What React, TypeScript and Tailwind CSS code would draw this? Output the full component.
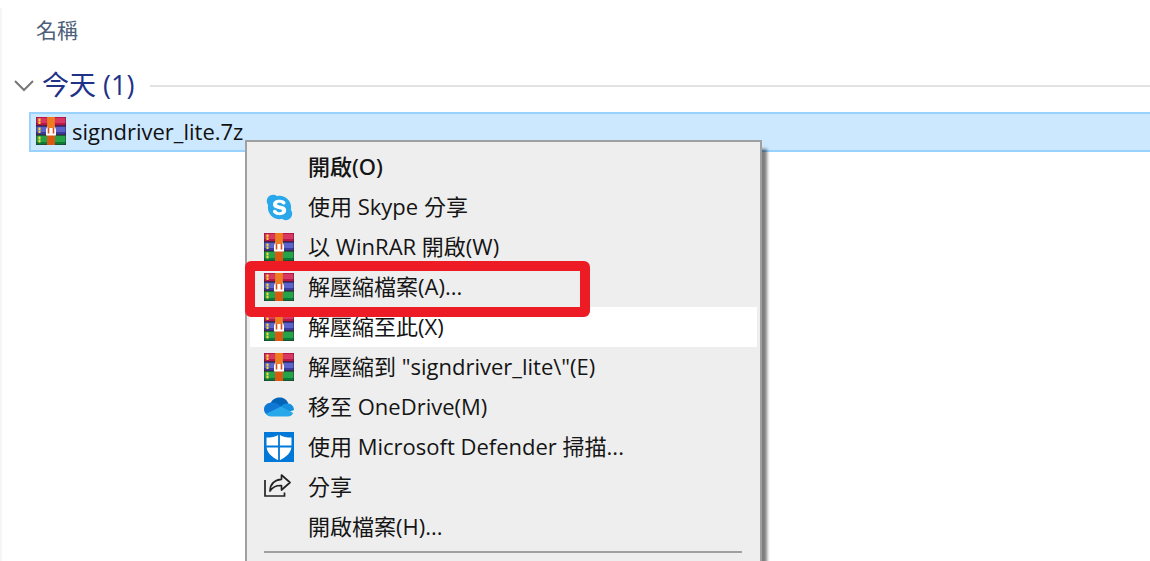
import type { ReactNode } from "react";
import { FaSkype } from "react-icons/fa";

function ArchiveIcon() {
  return (
    <svg viewBox="0 0 30 28" className="h-7 w-[30px] shrink-0" aria-hidden="true">
      <rect width="30" height="9" fill="#b8174c" />
      <rect y="1" width="30" height="5" fill="#d8385f" />
      <rect y="9" width="30" height="9" fill="#3a3c9c" />
      <rect y="10" width="30" height="5" fill="#5a63c8" />
      <rect y="18" width="30" height="10" fill="#0c7a35" />
      <rect y="19" width="30" height="6" fill="#25a348" />
      <path d="M0 8.700h30M0 17.800h30" stroke="#40203c" strokeWidth="1" />
      <path d="M0 27.500h30M.5 0v28M29.500 0v28" stroke="#2b1836" strokeOpacity=".4" />
      <path d="M3.500 1.500v6M3.500 10.500v6M3.500 19.500v6.500" stroke="#ffdc32" strokeWidth="2" strokeDasharray="2.500 .5" />
      <rect x="11" width="8" height="28" fill="#e46818" />
      <rect x="11" y="18" width="8" height="10" fill="#dc5712" />
      <path d="M10 18.500v-6L11.500 9h7l1.500 3.500v6z" fill="#fff" />
      <path d="M12.500 16.500V9h5v7.500" fill="none" stroke="#e04a12" strokeWidth="1.600" />
      <path d="M11.500 0h7v11h-7z" fill="#ee7d20" />
    </svg>
  );
}

function SkypeIcon() {
  return (
    <span className="ml-[2px] flex size-[26px] items-center justify-center bg-[radial-gradient(circle,#fff_50%,transparent_52%)]">
      <FaSkype className="size-[29px] shrink-0 text-[#28a8ea]" aria-hidden="true" />
    </span>
  );
}

function CloudIcon() {
  return (
    <svg viewBox="0 0 30 20" className="h-5 w-[30px]" aria-hidden="true">
      <path d="M6 7C8 2 12 .4 16 .4c4 0 7 2.600 8.300 6L20 14H4z" fill="#0364b8" />
      <path d="M6.500 5.800c3-.6 5.500.2 7.500 1.500l5 3L6 18.500C2 18.500 0 15.500 0 12.300 0 8.500 3 6 6.500 5.800z" fill="#0f78d4" />
      <path d="M17 9.500c1.700-2.200 4-3.300 7-3.100 3.500.2 6 3 6 6.600L22 16z" fill="#1490df" />
      <path d="M2 16.800 17 9.500 29.200 16c-1.200 2.400-3 3.500-5.500 3.500H7c-2.200 0-4-.8-5-2.700z" fill="#28a8ea" />
    </svg>
  );
}

function DefenderIcon() {
  return (
    <svg viewBox="0 0 30 30" className="size-[30px]" aria-hidden="true">
      <rect width="30" height="30" fill="#0078d7" />
      <path d="M15 2.500C11.500 5 7 5.500 2.500 5.500V14c0 6.500 5 11 12.500 14.500C22.500 25 27.500 20.500 27.500 14V5.500C23 5.500 18.500 5 15 2.500z" fill="#fff" />
      <path d="M15 2v27M2 14.500h26" stroke="#0078d7" strokeWidth="1.800" />
    </svg>
  );
}

function ShareIcon() {
  return (
    <svg viewBox="0 0 28 26" className="h-[26px] w-7" fill="none" stroke="#222" strokeWidth="1.700" aria-hidden="true">
      <path d="M1 6v16h19.500v-3.500" />
      <path d="M17.500 1 26 8.500 17.500 16v-4.500C12 11.300 8.500 13 6 17c.2-7 4.500-11.300 11.500-11.700z" strokeLinejoin="round" />
    </svg>
  );
}

type MenuEntry = {
  label: string;
  icon?: ReactNode;
  primary?: boolean;
  hovered?: boolean;
  marked?: boolean;
};

const entries: MenuEntry[] = [
  { label: "開啟(O)", primary: true },
  { label: "使用 Skype 分享", icon: <SkypeIcon /> },
  { label: "以 WinRAR 開啟(W)", icon: <ArchiveIcon /> },
  { label: "解壓縮檔案(A)...", icon: <ArchiveIcon />, marked: true },
  { label: "解壓縮至此(X)", icon: <ArchiveIcon />, hovered: true },
  { label: '解壓縮到 "signdriver_lite\\"(E)', icon: <ArchiveIcon /> },
  { label: "移至 OneDrive(M)", icon: <CloudIcon /> },
  { label: "使用 Microsoft Defender 掃描...", icon: <DefenderIcon /> },
  { label: "分享", icon: <ShareIcon /> },
  { label: "開啟檔案(H)..." },
];

function MenuItem({ label, icon, primary, hovered, marked }: MenuEntry) {
  return (
    <li role="none" className="relative">
      <button
        type="button"
        role="menuitem"
        className={`flex h-10 w-full items-center pl-[14px] text-left text-[22px] whitespace-nowrap text-[#151515] ${
          hovered ? "bg-white" : ""
        } ${primary ? "font-['Noto_Sans','Noto_Sans_CJK_TC',sans-serif] font-medium" : ""}`}
      >
        <span className="flex w-11 shrink-0 items-center">{icon}</span>
        <span className="pb-[2px]">{label}</span>
      </button>
      {marked && (
        <span className="pointer-events-none absolute -top-[6px] -left-[5px] z-10 h-14 w-[345px] rounded-md border-10 border-[#ed1c24]" />
      )}
    </li>
  );
}

export default function App() {
  return (
    <main className="relative h-screen overflow-hidden bg-white pt-2 font-['Open_Sans','Noto_Sans_CJK_TC',sans-serif] leading-7">
      <div className="h-full border-l-2 border-[#f5f5f5] pt-2">
        <button type="button" className="ml-[34px] block text-[21px] leading-7 text-[#4c607a]">
          名稱
        </button>
        <section>
          <button type="button" className="mt-6 flex h-9 w-full items-center text-[27px] text-[#1e3287]">
            <svg viewBox="0 0 20 12" className="ml-3 mr-2 h-3 w-5 shrink-0" fill="none" stroke="#777" strokeWidth="2" aria-hidden="true">
              <path d="m1 1 9 9 9-9" />
            </svg>
            <span className="pb-[2px] whitespace-nowrap">今天 (1)</span>
            <span className="ml-4 h-[2px] grow bg-[#e2e2e2]" />
          </button>
          <a
            href="#signdriver_lite"
            className="ml-[27px] mt-2 flex h-10 items-center border-2 border-r-0 border-[#99d1ff] bg-[#cce8ff] pb-[2px] pl-[5px] text-[22px] text-[#111]"
          >
            <ArchiveIcon />
            <span className="ml-[6px]">signdriver_lite.7z</span>
          </a>
        </section>
      </div>
      <ul
        role="menu"
        className="absolute top-[140px] -bottom-4 left-[245px] w-[517px] border-2 border-[#a0a0a0] bg-[#eee] px-[3px] pt-[5px] shadow-[5px_9px_3px_rgba(0,0,0,0.5)]"
      >
        {entries.map((entry) => (
          <MenuItem key={entry.label} {...entry} />
        ))}
        <li role="separator" className="mt-1 mr-[15px] ml-[14px] h-[2px] bg-[#a0a0a0]" />
      </ul>
    </main>
  );
}
